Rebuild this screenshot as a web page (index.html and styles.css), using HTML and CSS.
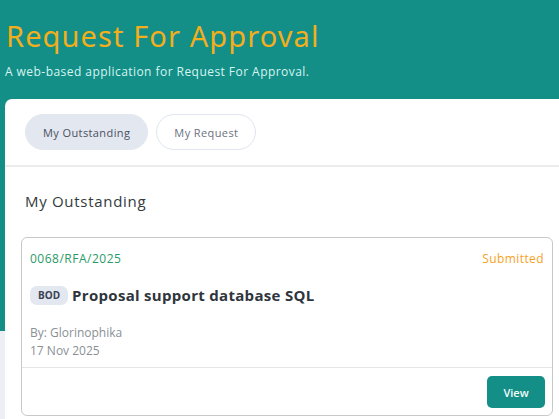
FILE: index.html
```html
<!DOCTYPE html>
<html>
<head>
<meta charset="utf-8">
<link rel="stylesheet" href="styles.css">
</head>
<body>
<header class="hero">
  <h1 class="hero-title">Request For Approval</h1>
  <p class="hero-sub">A web-based application for Request For Approval.</p>
</header>
<main class="panel">
  <nav class="tabs">
    <button class="tab tab-active">My Outstanding</button>
    <button class="tab">My Request</button>
  </nav>
  <section class="content">
    <h2 class="section-title">My Outstanding</h2>
    <article class="req">
      <div class="req-body">
        <div class="req-top">
          <span class="req-no">0068/RFA/2025</span>
          <span class="req-status">Submitted</span>
        </div>
        <div class="req-title-row">
          <span class="badge">BOD</span>
          <span class="req-title">Proposal support database SQL</span>
        </div>
        <div class="req-meta">
          <div>By: Glorinophika</div>
          <div>17 Nov 2025</div>
        </div>
      </div>
      <div class="req-foot">
        <button class="btn-view">View</button>
      </div>
    </article>
  </section>
</main>
</body>
</html>
```
FILE: styles.css
```css
* { box-sizing: border-box; }
html, body { margin: 0; padding: 0; }
body {
  width: 559px;
  height: 419px;
  overflow: hidden;
  font-family: "Open Sans", "Noto Sans", sans-serif;
  background: linear-gradient(#138f87 0, #138f87 331px, #eceff6 331px);
}
.hero {
  padding: 18px 0 0 6px;
  height: 99px;
}
.hero-title {
  margin: 0;
  font-family: "Noto Sans", sans-serif;
  font-weight: 400;
  font-size: 29px;
  line-height: 36px;
  letter-spacing: 1.1px;
  color: #f2ae1c;
}
.hero-sub {
  margin: 10px 0 0 -1px;
  font-size: 12px;
  line-height: 16px;
  letter-spacing: 0.45px;
  color: #d6f4f0;
}
.panel {
  margin-left: 5px;
  width: 564px;
  height: 330px;
  background: #fff;
  border-radius: 7px 7px 0 0;
}
.tabs {
  display: flex;
  gap: 8px;
  padding: 15px 20px 15px 20px;
  border-bottom: 2px solid #ececec;
  height: 68px;
}
.tab {
  height: 36px;
  padding: 0 17px;
  border-radius: 18px;
  border: 1px solid #dfe4ee;
  background: #fff;
  font-family: inherit;
  font-size: 11px;
  letter-spacing: 0.4px;
  color: #6b7280;
}
.tab-active {
  background: #e2e7f0;
  border-color: #e2e7f0;
  color: #4a5160;
}
.content {
  padding: 24px 16px 0 16px;
}
.section-title {
  margin: 0 0 26px 4px;
  font-size: 15px;
  font-weight: 500;
  line-height: 20px;
  letter-spacing: 0.7px;
  color: #333a40;
}
.req {
  border: 1px solid #c9c9c9;
  border-radius: 6px;
  height: 179px;
  display: flex;
  flex-direction: column;
}
.req-body {
  padding: 13px 8px 0 8px;
  height: 130px;
  border-bottom: 1px solid #e6e6e6;
}
.req-top {
  display: flex;
  justify-content: space-between;
  font-size: 12px;
  line-height: 16px;
}
.req-no { color: #2a9a6a; letter-spacing: 0.5px; }
.req-status { color: #f6a21e; font-weight: 500; letter-spacing: 0.4px; }
.req-title-row {
  display: flex;
  align-items: center;
  gap: 4px;
  margin-top: 18px;
}
.badge {
  background: #e2e7f0;
  color: #3a4150;
  font-size: 10px;
  font-weight: 700;
  padding: 3px 8px;
  border-radius: 7px;
  line-height: 13px;
}
.req-title {
  font-size: 15px;
  font-weight: 700;
  color: #2f353d;
  line-height: 20px;
  letter-spacing: 0.3px;
}
.req-meta {
  margin-top: 19px;
  font-size: 12px;
  line-height: 18px;
  color: #8a8f96;
}
.req-foot {
  display: flex;
  justify-content: flex-end;
  padding: 8px 7px 0 0;
}
.btn-view {
  width: 58px;
  height: 32px;
  border: none;
  border-radius: 5px;
  background: #138f87;
  color: #f2fbfa;
  font-family: inherit;
  font-size: 11px;
  font-weight: 600;
}
```
